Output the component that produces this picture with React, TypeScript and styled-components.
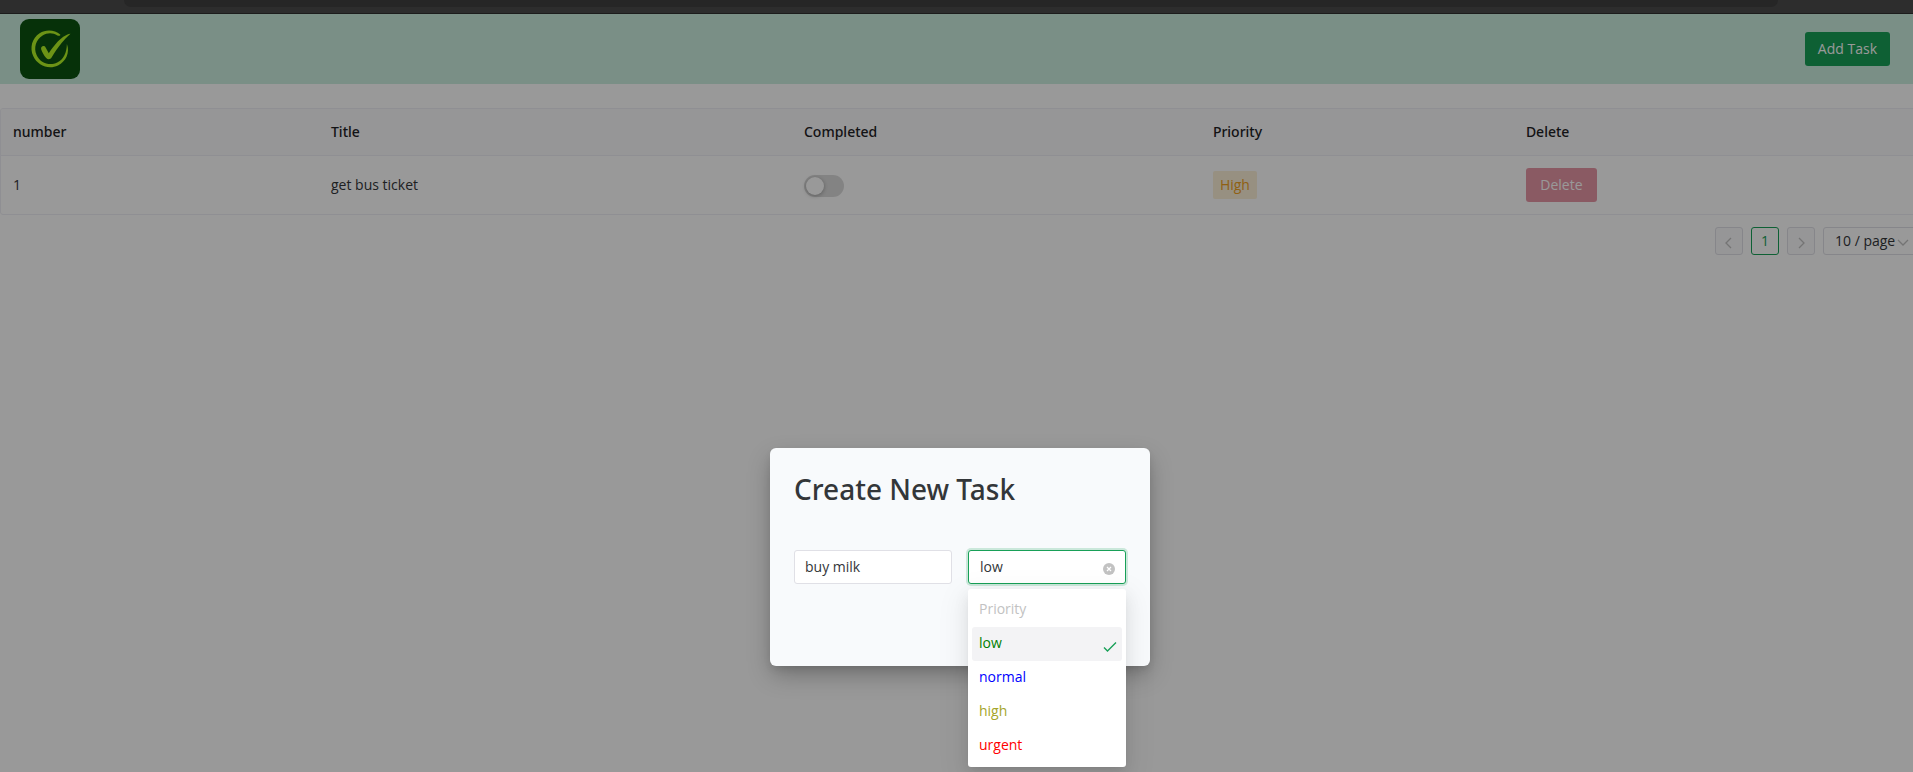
import React, { useState } from 'react';
import styled, { createGlobalStyle } from 'styled-components';

const GlobalStyle = createGlobalStyle`
  *, *::before, *::after { box-sizing: border-box; }
  body { margin: 0; background: #fff; }
  body, button, input, select {
    font-family: "Open Sans", "Noto Sans", sans-serif;
    font-size: 14px;
    line-height: 22px;
    color: #333639;
  }
`;

const Viewport = styled.div`
  overflow: hidden;
`;

const Screen = styled.div`
  display: flex;
  flex-direction: column;
  height: 100vh;
  min-height: 768px;
  margin-right: -7px;
`;

const TopStrip = styled.div`
  flex: none;
  height: 14px;
  padding: 0 142px 0 124px;
  background: #2d2d2d;
  border-bottom: 1px solid #1c1c1c;
`;

const AddressPill = styled.div`
  height: 7px;
  background: #262626;
  border-radius: 0 0 14px 14px;
`;

const Page = styled.div`
  position: relative;
  flex: 1;
`;

const Header = styled.header`
  display: flex;
  align-items: center;
  justify-content: space-between;
  padding: 5px 30px 5px 20px;
  background: #cbeee0;
`;

const Logo = styled.svg`
  display: block;
  width: 60px;
  height: 60px;
`;

const Button = styled.button<{ $tone: string }>`
  min-width: 71px;
  height: 34px;
  padding: 0 13px;
  border: 0;
  border-radius: 3px;
  background: ${(p) => p.$tone};
  color: #fff;
  &:disabled { opacity: 0.5; }
`;

const TableFrame = styled.div`
  margin-top: 24px;
  border: 1px solid #efeff5;
  border-radius: 3px;
  overflow: hidden;
`;

const Table = styled.table`
  width: 100%;
  table-layout: fixed;
  border-collapse: separate;
  border-spacing: 0;
`;

const Col = styled.col<{ $share?: number }>`
  width: ${(p) => (p.$share ? `${p.$share}%` : 'auto')};
`;

const Th = styled.th`
  padding: 12px;
  border-bottom: 1px solid #efeff5;
  background: #fafafc;
  color: #1f2225;
  font-family: "Noto Sans", sans-serif;
  font-weight: 500;
  text-align: left;
`;

const Td = styled.td`
  height: 58px;
  padding: 0 12px;
  vertical-align: middle;
`;

const Switch = styled.input`
  display: block;
  appearance: none;
  width: 40px;
  height: 22px;
  margin: 2px 0 0;
  padding: 2px;
  border-radius: 11px;
  background: #dbdbdb;
  &::before {
    content: "";
    display: block;
    width: 18px;
    height: 18px;
    border-radius: 50%;
    background: #fff;
    box-shadow: 0 1px 4px rgba(0, 0, 0, 0.3);
  }
  &:checked { background: #18a058; }
  &:checked::before { margin-left: 18px; }
`;

const Tag = styled.span`
  display: inline-block;
  padding: 0 7px;
  border-radius: 2px;
  background: #fcf0d8;
  color: #f0a020;
  line-height: 28px;
`;

const Pagination = styled.nav`
  display: flex;
  justify-content: flex-end;
  gap: 8px;
  margin-top: 12px;
`;

const PageButton = styled.button<{ $active?: boolean }>`
  display: flex;
  align-items: center;
  justify-content: center;
  width: 28px;
  height: 28px;
  padding: 0;
  border: 1px solid ${(p) => (p.$active ? '#18a058' : '#e0e0e6')};
  border-radius: 3px;
  background: ${(p) => (p.$active ? 'transparent' : '#fafafc')};
  color: ${(p) => (p.$active ? '#18a058' : '#c2c2c2')};
`;

const Glyph = styled.svg`
  display: block;
  width: 16px;
  height: 16px;
  fill: none;
  stroke: currentColor;
`;

const PageSize = styled.label`
  position: relative;
  color: #c2c2c2;
`;

const PageSizeSelect = styled.select`
  display: block;
  appearance: none;
  width: 97px;
  height: 28px;
  padding: 0 20px 0 11px;
  border: 1px solid #e0e0e6;
  border-radius: 3px;
  background: #fff;
`;

const PageSizeArrow = styled(Glyph)`
  position: absolute;
  top: 8px;
  right: 9px;
  pointer-events: none;
`;

const Overlay = styled.div`
  position: absolute;
  inset: 0;
  display: flex;
  align-items: flex-start;
  justify-content: center;
  padding-top: 434px;
  background: rgba(0, 0, 0, 0.4);
`;

const Dialog = styled.form`
  width: 380px;
  min-height: 218px;
  padding: 24px;
  border-radius: 6px;
  background: #f8fafc;
  box-shadow: 0 10px 25px -2px rgba(0, 0, 0, 0.28), 0 4px 8px -2px rgba(0, 0, 0, 0.12);
`;

const DialogTitle = styled.h1`
  margin: 0 0 44px;
  font-family: "Noto Sans", sans-serif;
  font-size: 28px;
  font-weight: 500;
  line-height: 34px;
`;

const Fields = styled.div`
  display: grid;
  grid-template-columns: 1fr 1fr;
  gap: 16px;
`;

const TextInput = styled.input`
  width: 100%;
  height: 34px;
  padding: 0 10px 2px;
  border: 1px solid #e0e0e6;
  border-radius: 3px;
  background: #fff;
  outline: 0;
`;

const SelectBox = styled.div`
  position: relative;
`;

const PrioritySelect = styled.select`
  display: block;
  appearance: none;
  width: 100%;
  height: 34px;
  padding: 0 28px 0 11px;
  border: 1px solid #18a058;
  border-radius: 3px;
  background: #fff;
  box-shadow: 0 0 0 2px rgba(24, 160, 88, 0.2);
  outline: 0;
`;

const ClearButton = styled.button`
  position: absolute;
  top: 11px;
  right: 9px;
  width: 16px;
  height: 16px;
  padding: 0;
  border: 0;
  background: none;
  color: #c2c2c2;
`;

const Menu = styled.ul`
  position: absolute;
  top: 39px;
  left: 0;
  right: 0;
  margin: 0;
  padding: 4px;
  border-radius: 3px;
  background: #fff;
  box-shadow: 0 3px 6px -4px rgba(0, 0, 0, 0.12), 0 6px 16px rgba(0, 0, 0, 0.08),
    0 9px 28px 8px rgba(0, 0, 0, 0.05);
  list-style: none;
`;

const Option = styled.li<{ $color: string; $selected: boolean }>`
  display: flex;
  align-items: center;
  justify-content: space-between;
  height: 34px;
  padding: 0 4px 2px 7px;
  border-radius: 3px;
  background: ${(p) => (p.$selected ? '#f3f3f5' : 'transparent')};
  color: ${(p) => p.$color};
`;

const CheckGlyph = styled(Glyph)`
  margin-top: 8px;
  color: #18a058;
`;

const priorities = [
  { label: 'Priority', color: '#c2c2c2', disabled: true },
  { label: 'low', color: '#008000', disabled: false },
  { label: 'normal', color: '#0000ff', disabled: false },
  { label: 'high', color: '#a5a52a', disabled: false },
  { label: 'urgent', color: '#ff0000', disabled: false },
];

const TaskLogo = () => (
  <Logo viewBox="0 0 60 60" role="img" aria-label="Tasks">
    <rect width="60" height="60" rx="9" fill="#0a530f" />
    <g fill="#b4f525">
      <path d="M40.2 15.4 C34.8 10.8 26 10 19.6 14.2 C12 19 9.5 28.8 13.2 37 C17.3 46.3 28.6 51 38 46.4 C46 42.5 50.1 33.4 46.9 25 C46.8 34 43.4 40.6 37.2 43.6 C29.3 47.4 20 43.8 16.6 36 C13.4 28.6 16 20.3 22.6 16.4 C27.3 13.6 33 13.7 37.4 16.4 C39.2 17.3 40.8 16.3 40.2 15.4 Z" />
      <path d="M50.5 14.8 C46 15.3 40.5 19.5 36.5 24 C33.3 27.6 30.8 31 28.8 34.2 L25.6 28.4 C24.2 25.8 20.2 27.3 21.2 30.4 C22.2 33.4 24.2 36.8 26.2 39 C27.8 40.8 30.3 40.7 31.6 38.6 C34.5 33.5 38 28.3 41.6 24 C44.2 20.8 47.2 17.7 50.5 14.8 Z" />
    </g>
  </Logo>
);

export default function App() {
  const [title, setTitle] = useState('buy milk');
  const [priority, setPriority] = useState('low');

  return (
    <Viewport>
      <GlobalStyle />
      <Screen>
        <TopStrip>
          <AddressPill />
        </TopStrip>
        <Page>
          <Header>
            <TaskLogo />
            <Button type="button" $tone="#18a058">Add Task</Button>
          </Header>
          <TableFrame>
            <Table>
              <colgroup>
                <Col $share={16.58} />
                <Col $share={24.66} />
                <Col $share={21.32} />
                <Col $share={16.32} />
                <Col />
              </colgroup>
              <thead>
                <tr>
                  <Th>number</Th>
                  <Th>Title</Th>
                  <Th>Completed</Th>
                  <Th>Priority</Th>
                  <Th>Delete</Th>
                </tr>
              </thead>
              <tbody>
                <tr>
                  <Td>1</Td>
                  <Td>get bus ticket</Td>
                  <Td><Switch type="checkbox" role="switch" aria-label="Completed" /></Td>
                  <Td><Tag>High</Tag></Td>
                  <Td><Button type="button" disabled $tone="#d03050">Delete</Button></Td>
                </tr>
              </tbody>
            </Table>
          </TableFrame>
          <Pagination aria-label="Pagination">
            <PageButton type="button" aria-label="Previous page" disabled>
              <Glyph viewBox="0 0 16 16"><path d="M10 5 L5 10 L10 15" strokeWidth="1.3" /></Glyph>
            </PageButton>
            <PageButton type="button" $active>1</PageButton>
            <PageButton type="button" aria-label="Next page" disabled>
              <Glyph viewBox="0 0 16 16"><path d="M6 5 L11 10 L6 15" strokeWidth="1.3" /></Glyph>
            </PageButton>
            <PageSize>
              <PageSizeSelect aria-label="Rows per page">
                <option>10 / page</option>
              </PageSizeSelect>
              <PageSizeArrow viewBox="0 0 16 16"><path d="M3 5 L8 10 L13 5" strokeWidth="1.3" /></PageSizeArrow>
            </PageSize>
          </Pagination>
          <Overlay>
            <Dialog role="dialog" aria-labelledby="dialog-title">
              <DialogTitle id="dialog-title">Create New Task</DialogTitle>
              <Fields>
                <TextInput
                  aria-label="Title"
                  value={title}
                  onChange={(e) => setTitle(e.target.value)}
                />
                <SelectBox>
                  <PrioritySelect
                    aria-label="Priority"
                    value={priority}
                    onChange={(e) => setPriority(e.target.value)}
                  >
                    {priorities.map((p) => (
                      <option key={p.label} disabled={p.disabled}>{p.label}</option>
                    ))}
                  </PrioritySelect>
                  <ClearButton type="button" aria-label="Clear priority" onClick={() => setPriority('Priority')}>
                    <Glyph viewBox="0 0 16 16">
                      <circle cx="8" cy="8" r="6" fill="currentColor" stroke="none" />
                      <path d="M6 6 L10 10 M10 6 L6 10" stroke="#fff" strokeWidth="1.2" />
                    </Glyph>
                  </ClearButton>
                  <Menu role="listbox" aria-label="Priority">
                    {priorities.map((p) => (
                      <Option
                        key={p.label}
                        role="option"
                        aria-selected={p.label === priority}
                        aria-disabled={p.disabled}
                        $color={p.color}
                        $selected={p.label === priority}
                        onClick={() => !p.disabled && setPriority(p.label)}
                      >
                        {p.label}
                        {p.label === priority && (
                          <CheckGlyph viewBox="0 0 16 16"><path d="M2 8.5 L5.5 12 L14 3.5" strokeWidth="1.4" /></CheckGlyph>
                        )}
                      </Option>
                    ))}
                  </Menu>
                </SelectBox>
              </Fields>
            </Dialog>
          </Overlay>
        </Page>
      </Screen>
    </Viewport>
  );
}
